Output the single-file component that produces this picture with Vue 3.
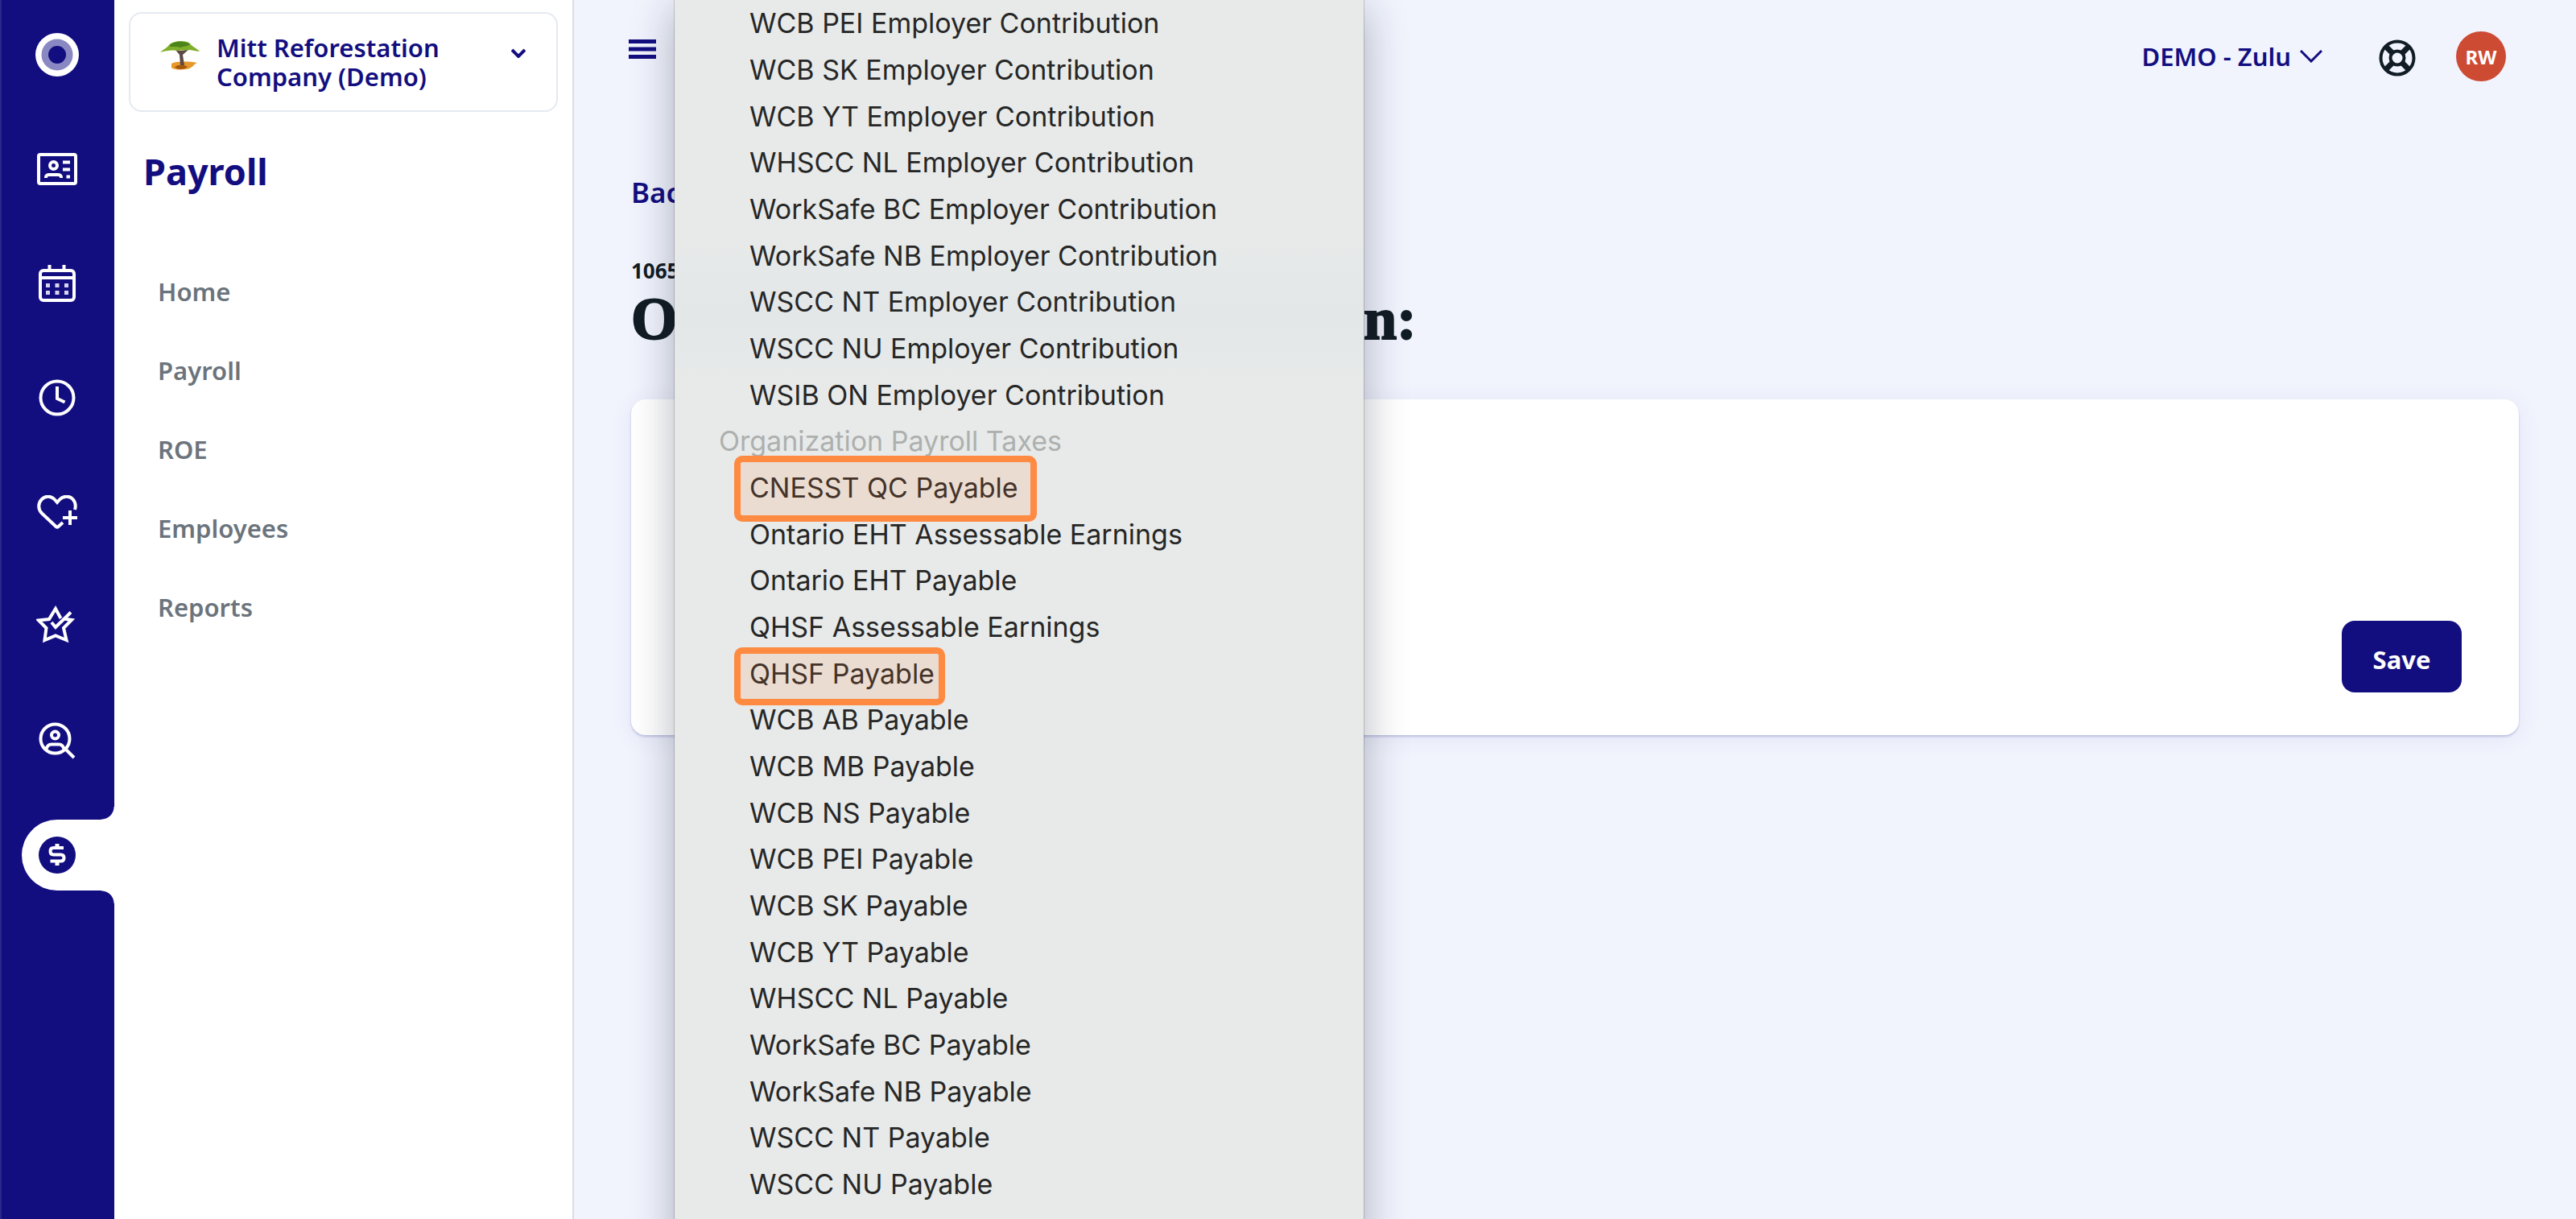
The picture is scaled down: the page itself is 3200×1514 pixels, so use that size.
<script setup>
import { computed } from 'vue'

const sections = ['Home', 'Payroll', 'ROE', 'Employees', 'Reports']

const contributions = [
  'WCB PEI', 'WCB SK', 'WCB YT', 'WHSCC NL', 'WorkSafe BC',
  'WorkSafe NB', 'WSCC NT', 'WSCC NU', 'WSIB ON',
].map((name) => ({ label: `${name} Employer Contribution`, mark: '' }))

const taxes = [
  { label: 'CNESST QC Payable', mark: 'mark mark-tall' },
  { label: 'Ontario EHT Assessable Earnings', mark: '' },
  { label: 'Ontario EHT Payable', mark: '' },
  { label: 'QHSF Assessable Earnings', mark: '' },
  { label: 'QHSF Payable', mark: 'mark mark-short' },
  ...[
    'WCB AB', 'WCB MB', 'WCB NS', 'WCB PEI', 'WCB SK', 'WCB YT', 'WHSCC NL',
    'WorkSafe BC', 'WorkSafe NB', 'WSCC NT', 'WSCC NU', 'WSIB ON',
  ].map((name) => ({ label: `${name} Payable`, mark: '' })),
]

const rows = computed(() => [
  ...contributions,
  { label: 'Organization Payroll Taxes', group: true, mark: '' },
  ...taxes,
])
</script>

<template>
  <div class="app">
    <nav class="rail" aria-label="Modules">
      <a href="#" class="rail-link" aria-label="Dashboard">
        <svg width="54" height="54" viewBox="0 0 54 54">
          <circle cx="27" cy="27" r="27" fill="#fff" />
          <circle cx="27" cy="27" r="19.5" fill="#8a88c2" />
          <circle cx="27" cy="27" r="11" fill="#130e80" />
        </svg>
      </a>
      <a href="#" class="rail-link" aria-label="People">
        <svg width="50" height="40" viewBox="0 0 50 40" fill="none" stroke="#fff" stroke-width="4">
          <rect x="2" y="2" width="46" height="36" rx="2" />
          <circle cx="20.500" cy="15.500" r="4.500" />
          <path d="M11 31v-1c0-2 2-3 4-3h11c2 0 4 1 4 3v1" />
          <path d="M32 11.500h9M32 20.500h9M36.500 29.500h4.500" />
        </svg>
      </a>
      <a href="#" class="rail-link" aria-label="Calendar">
        <svg width="46" height="46" viewBox="0 0 46 46" fill="none" stroke="#fff" stroke-width="4">
          <rect x="2" y="7" width="42" height="37" rx="4" />
          <path d="M2 16h42M13.500 0v7M31.500 0v7" />
          <path d="M9 25.500h5M20.500 25.500h5M32 25.500h5M9 34.500h5M20.500 34.500h5M32 34.500h5" stroke="#d9d4ee" stroke-width="5" />
        </svg>
      </a>
      <a href="#" class="rail-link" aria-label="Time">
        <svg width="46" height="46" viewBox="0 0 46 46" fill="none" stroke="#fff" stroke-width="4">
          <circle cx="23" cy="23" r="20.500" />
          <path d="M23 9v15l9.500 4.500" />
        </svg>
      </a>
      <a href="#" class="rail-link" aria-label="Benefits">
        <svg width="50" height="42" viewBox="0 0 50 42" fill="none" stroke="#fff" stroke-width="4">
          <path d="M32 34l-5.500 5q-1.500 1.500-3 0L6 22.500C1 17.500 1 10 6 5s12-4 16 .500l3 3.500 3-3.500C32 1 40 0 44.500 5c3 3.500 4 8 2.500 13" />
          <path d="M41 19v18M32 28h18" />
        </svg>
      </a>
      <a href="#" class="rail-link" aria-label="Performance">
        <svg width="52" height="52" viewBox="0 0 52 52" fill="none" stroke="#fff" stroke-width="4">
          <path d="M34 16.500l10 1.500-10 10 3.500 15L24 37.500 10.500 43l2-15L3 18.500l13-1.500L24 4l6.500 12" />
          <path d="M19 21l5 6L43 8.500" />
        </svg>
      </a>
      <a href="#" class="rail-link" aria-label="Recruiting">
        <svg width="46" height="46" viewBox="0 0 46 46" fill="none" stroke="#fff" stroke-width="4">
          <circle cx="20.500" cy="20.500" r="18" />
          <circle cx="20.500" cy="16" r="4.500" />
          <path d="M9 35c1-5 4-7.500 7-7.500h9c3 0 6 2.500 7 7.500M33 33l11 11" />
        </svg>
      </a>
      <a href="#" class="rail-link active" aria-label="Payroll" aria-current="page">
        <svg width="46" height="46" viewBox="0 0 46 46" fill="none" stroke="#fff" stroke-width="4">
          <circle cx="23" cy="23" r="23" fill="#130e80" stroke="none" />
          <path d="M31 14H18.500q-4 0-4 4.250t4 4.250h9q4 0 4 4t-4 4H14.500" />
          <path d="M23 9v5M23 30v6" stroke-width="5" />
        </svg>
      </a>
    </nav>

    <aside class="sidebar">
      <button type="button" class="company">
        <svg class="tree" width="50" height="38" viewBox="0 0 50 38">
          <path d="M14 29c6-3 20-3 32-1-5 2-4 5-11 7.500-9 2-19 1-21-1.500z" fill="#e79a2b" />
          <path d="M18 33c5-3 11-3 16 0-4 4-13 4-16 0z" fill="#a3580c" />
          <path d="M19 12l5 6 1 13h5l-2-13 8-7-9 2z" fill="#5d4a45" />
          <path d="M0 15C4 11 8 10 11 6 15 1 31-1 37 4c2 4 8 5 12 10-5-1-8-1-12-2-6 1-12 0-17 1-6-1-13 0-20 2z" fill="#7fae2a" />
          <path d="M11 7c6-7 20-6 26-2-3 3-8 2-12 4-5-2-9 0-14-2z" fill="#4b8418" />
        </svg>
        <span class="company-name">Mitt Reforestation Company (Demo)</span>
        <svg class="caret" width="18" height="12" viewBox="0 0 18 12" fill="none" stroke="#130e80" stroke-width="4">
          <path d="M1 2l8 8 8-8" />
        </svg>
      </button>
      <h2 class="module">Payroll</h2>
      <nav class="sections" aria-label="Payroll">
        <a v-for="section in sections" :key="section" href="#">{{ section }}</a>
      </nav>
    </aside>

    <main class="content">
      <header class="topbar">
        <button type="button" class="burger" aria-label="Toggle menu">
          <svg width="34" height="24" viewBox="0 0 34 24" stroke="#130e80" stroke-width="5">
            <path d="M0 2.500h34M0 12h34M0 21.500h34" />
          </svg>
        </button>
        <button type="button" class="account">
          DEMO - Zulu
          <svg width="28" height="16" viewBox="0 0 28 16" fill="none" stroke="#130e80" stroke-width="3">
            <path d="M1 1l13 13L27 1" />
          </svg>
        </button>
        <a href="#" class="help" aria-label="Help">
          <svg width="46" height="46" viewBox="0 0 46 46" fill="none" stroke="#111c24" stroke-width="4">
            <circle cx="23" cy="23" r="20.500" />
            <circle cx="23" cy="23" r="8.500" />
            <path d="M8.500 8.500l8.500 8.500M37.500 8.500L29 17M8.500 37.500L17 29M37.500 37.500L29 29" stroke-width="7" />
          </svg>
        </a>
        <button type="button" class="avatar">RW</button>
      </header>

      <a href="#" class="back">Back</a>
      <p class="code">1065</p>
      <h1 class="title">Other Employer Contribution:</h1>

      <section class="card">
        <button type="submit" class="save">Save</button>
      </section>
    </main>

    <ul class="menu" role="listbox" aria-label="Payroll item">
      <li
        v-for="(row, index) in rows"
        :key="index"
        :class="{ group: row.group }"
        :role="row.group ? 'presentation' : 'option'"
      >
        {{ row.label }}
        <span v-if="row.mark" :class="row.mark"></span>
      </li>
    </ul>
  </div>
</template>

<style>
html,
body {
  height: 100%;
}
#app {
  height: 100%;
}
</style>

<style scoped>
* {
  box-sizing: border-box;
}
.app {
  position: relative;
  display: flex;
  height: 100%;
  overflow: hidden;
  background: #f1f4fd;
  color: #111c24;
  font-family: 'Noto Sans', sans-serif;
  font-size: 31px;
}
a {
  color: inherit;
  text-decoration: none;
}
button {
  border: 0;
  padding: 0;
  background: none;
  color: inherit;
  font: inherit;
  cursor: pointer;
}
svg {
  display: block;
  flex: none;
}

.rail {
  display: flex;
  flex: none;
  flex-direction: column;
  gap: 54px;
  width: 142px;
  padding-top: 24px;
  background: #130e80;
  box-shadow: inset 2px 0 #2a268c;
}
.rail-link {
  display: flex;
  align-items: center;
  justify-content: center;
  height: 88px;
}
.rail-link.active {
  position: relative;
  margin-left: 27px;
  padding-right: 27px;
  border-radius: 44px 0 0 44px;
  background: #fff;
}
.rail-link.active::before,
.rail-link.active::after {
  content: '';
  position: absolute;
  right: 0;
  width: 16px;
  height: 16px;
}
.rail-link.active::before {
  bottom: 100%;
  background: radial-gradient(circle at 0 0, #130e80 15px, #fff 16px);
}
.rail-link.active::after {
  top: 100%;
  background: radial-gradient(circle at 0 100%, #130e80 15px, #fff 16px);
}

.sidebar {
  flex: none;
  width: 571px;
  padding: 15px 18px;
  border-right: 2px solid #dcdde3;
  background: #fff;
}
.company {
  display: flex;
  align-items: flex-start;
  width: 100%;
  height: 124px;
  padding: 24px 38px 0 37px;
  border: 2px solid #e5e9f1;
  border-radius: 16px;
  color: #130e80;
  font-weight: 600;
  line-height: 36px;
  text-align: left;
}
.tree {
  margin-top: 9px;
}
.company-name {
  flex: 1;
  margin-left: 20px;
}
.caret {
  margin-top: 19px;
}
.module {
  margin: 44px 0 0 18px;
  color: #130e80;
  font-size: 45px;
  font-weight: 700;
  line-height: 60px;
}
.sections {
  display: flex;
  flex-direction: column;
  gap: 58px;
  margin: 99px 0 0 36px;
  color: #6b747c;
  font-weight: 600;
  line-height: 40px;
}

.content {
  flex: 1;
  min-width: 0;
  padding: 0 71px;
}
.topbar {
  display: flex;
  align-items: center;
  height: 140px;
}
.burger {
  margin: 0 auto 18px -3px;
}
.account {
  display: flex;
  align-items: center;
  gap: 11px;
  color: #130e80;
  font-weight: 600;
}
.help {
  margin: 4px 50px 0 70px;
}
.avatar {
  width: 62px;
  height: 62px;
  margin-right: 16px;
  border-radius: 50%;
  background: #cd4a33;
  color: #fff;
  font-size: 24px;
  font-weight: 700;
}
.back {
  display: block;
  margin-top: 75px;
  color: #130e80;
  font-size: 35px;
  font-weight: 600;
  line-height: 48px;
}
.code {
  margin: 57px 0 0;
  font-size: 26px;
  font-weight: 700;
  line-height: 32px;
}
.title {
  margin: 4px 0 0;
  font-family: 'Liberation Serif', serif;
  font-size: 74px;
  font-weight: 700;
  line-height: 80px;
  white-space: nowrap;
  -webkit-text-stroke: 2px #111c24;
}
.card {
  display: flex;
  align-items: flex-end;
  justify-content: flex-end;
  height: 417px;
  margin-top: 60px;
  padding: 0 71px 53px;
  border-radius: 18px;
  background: #fff;
  box-shadow: 0 2px 3px rgba(19, 14, 128, 0.2), 0 4px 32px rgba(19, 14, 128, 0.06);
}
.save {
  width: 149px;
  height: 89px;
  padding-top: 6px;
  border-radius: 16px;
  background: #130e80;
  color: #fff;
  font-weight: 700;
}

.menu {
  position: absolute;
  top: 0;
  left: 838px;
  width: 856px;
  margin: 0;
  padding: 0;
  background: linear-gradient(#e7eae9 300px, #e3e7e8 380px, #e3e7e8 400px, #e7eae9 470px);
  box-shadow: 0 0 0 1px rgba(0, 0, 0, 0.16), 0 10px 50px rgba(20, 24, 50, 0.32);
  color: #262626;
  font-family: Inter, sans-serif;
  font-size: 34px;
  list-style: none;
}
.menu li {
  position: relative;
  height: 58px;
  padding-left: 93px;
  line-height: 58px;
  white-space: nowrap;
}
.menu li:nth-child(3n) {
  height: 57px;
}
.menu li.group {
  padding-left: 55px;
  color: #adb0af;
}
.mark {
  position: absolute;
  z-index: 1;
  left: 74px;
  border: 8px solid #ff8a42;
  border-radius: 10px;
  background: rgba(255, 138, 66, 0.14);
}
.mark-tall {
  top: -11px;
  width: 376px;
  height: 82px;
}
.mark-short {
  top: -4px;
  width: 262px;
  height: 72px;
}
</style>
